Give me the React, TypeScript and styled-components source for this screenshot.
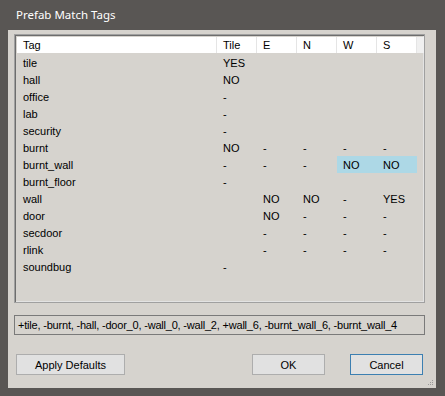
import React from 'react';
import styled, { createGlobalStyle } from 'styled-components';


const GlobalStyle = createGlobalStyle`
  html, body {
    margin: 0;
    padding: 0;
    background: #595654;
  }
`;

const Window = styled.div`
  display: flex;
  flex-direction: column;
  width: 445px;
  height: 396px;
  box-sizing: border-box;
  padding: 0 9px 8px 8px;
  background: #595654;
  font-family: "Liberation Sans", Arial, sans-serif;
`;

const TitleBar = styled.div`
  display: flex;
  align-items: center;
  height: 30px;
  padding: 0 0 1px 8px;
  box-sizing: border-box;
  color: #ffffff;
  font-family: "Noto Sans", "Open Sans", sans-serif;
  font-size: 11.5px;
`;

const Client = styled.div`
  position: relative;
  display: flex;
  flex-direction: column;
  flex: 1 0;
  padding: 4px 11px 13px 6px;
  background: #d6d3ce;
`;

const List = styled.div`
  height: 269px;
  box-sizing: border-box;
  border: 1px solid #a0a0a0;
  box-shadow: inset 1px 1px 0 #6d6d6d, inset -1px -1px 0 #e3e3e3;
  padding: 2px;
`;

const Grid = styled.div`
  display: grid;
  grid-template-columns: 200px repeat(5, 40px) 1fr;
  grid-auto-rows: 17px;
  color: #000000;
`;

const HeadCell = styled.div<{ $filler?: boolean }>`
  display: flex;
  align-items: center;
  height: 16px;
  padding: 0 0 0 6px;
  background: ${props => props.$filler ? '#f0f0f0' : '#ffffff'};
  border-right: 1px solid ${props => props.$filler ? 'transparent' : '#e5e5e5'};
  font-size: 11px;
`;

const Cell = styled.div<{ $hit?: boolean }>`
  display: flex;
  align-items: center;
  padding: 0 0 0 6px;
  background: ${props => props.$hit ? '#add8e6' : 'transparent'};
  font-size: 11px;
  white-space: nowrap;
`;

const Summary = styled.div`
  display: flex;
  align-items: center;
  height: 20px;
  margin: 12px 0 0;
  box-sizing: border-box;
  padding: 0 0 0 3px;
  border: 1px solid #7a7a7a;
  font-size: 11px;
  letter-spacing: -0.2px;
  white-space: nowrap;
  overflow: hidden;
`;

const Buttons = styled.div`
  display: flex;
  flex-direction: row;
  align-items: center;
  margin: 19px 2px 0 2px;
`;

const Spacer = styled.div`
  flex: 1 0;
`;

const Button = styled.button<{ $width: number; $focus?: boolean }>`
  width: ${props => props.$width}px;
  height: 21px;
  margin: 0 0 0 ${props => props.$focus ? 25 : 0}px;
  padding: 0;
  border: 1px solid ${props => props.$focus ? '#3c7fb1' : '#adadad'};
  background: #e1e1e1;
  color: #000000;
  font-family: "Liberation Sans", Arial, sans-serif;
  font-size: 11px;
`;

const Grip = styled.svg`
  position: absolute;
  right: 2px;
  bottom: 2px;
`;


const COLUMNS = ['Tag', 'Tile', 'E', 'N', 'W', 'S'];

const ROWS: string[][] = [
  ['tile', 'YES', '', '', '', ''],
  ['hall', 'NO', '', '', '', ''],
  ['office', '-', '', '', '', ''],
  ['lab', '-', '', '', '', ''],
  ['security', '-', '', '', '', ''],
  ['burnt', 'NO', '-', '-', '-', '-'],
  ['burnt_wall', '-', '-', '-', 'NO', 'NO'],
  ['burnt_floor', '-', '', '', '', ''],
  ['wall', '', 'NO', 'NO', '-', 'YES'],
  ['door', '', 'NO', '-', '-', '-'],
  ['secdoor', '', '-', '-', '-', '-'],
  ['rlink', '', '-', '-', '-', '-'],
  ['soundbug', '-', '', '', '', ''],
];

const HIGHLIGHT: Record<string, number[]> = {
  burnt_wall: [4, 5],
};


function App() {
  return (
    <Window>
      <GlobalStyle />
      <TitleBar>Prefab Match Tags</TitleBar>
      <Client>
        <List>
          <Grid>
            { COLUMNS.map(c => <HeadCell key={c}>{ c }</HeadCell>) }
            <HeadCell $filler />
            { ROWS.map(row => (
              <React.Fragment key={row[0]}>
                { row.map((v, i) => (
                  <Cell key={i} $hit={(HIGHLIGHT[row[0]] || []).includes(i)}>{ v }</Cell>
                )) }
                <Cell />
              </React.Fragment>
            )) }
          </Grid>
        </List>
        <Summary>+tile, -burnt, -hall, -door_0, -wall_0, -wall_2, +wall_6, -burnt_wall_6, -burnt_wall_4</Summary>
        <Buttons>
          <Button $width={109}>Apply Defaults</Button>
          <Spacer />
          <Button $width={73}>OK</Button>
          <Button $width={73} $focus>Cancel</Button>
        </Buttons>
        <Grip width="7" height="7" viewBox="0 0 7 7">
          <rect x="5" y="1" width="1" height="1" fill="#9a9a9a" />
          <rect x="3" y="3" width="1" height="1" fill="#9a9a9a" />
          <rect x="5" y="3" width="1" height="1" fill="#9a9a9a" />
          <rect x="1" y="5" width="1" height="1" fill="#9a9a9a" />
          <rect x="3" y="5" width="1" height="1" fill="#9a9a9a" />
          <rect x="5" y="5" width="1" height="1" fill="#9a9a9a" />
        </Grip>
      </Client>
    </Window>
  );
}

export default App;
